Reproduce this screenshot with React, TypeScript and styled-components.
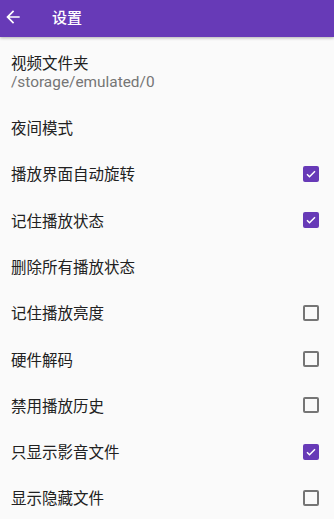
import React from 'react';
import styled, { createGlobalStyle } from 'styled-components';

interface Setting {
  id: string;
  title: string;
  summary?: string;
  checkbox?: boolean;
  checked?: boolean;
}

const GlobalStyle = createGlobalStyle`
  html, body {
    margin: 0;
    padding: 0;
    background: #fafafa;
  }
  body {
    font-family: Roboto, "Noto Sans CJK SC", sans-serif;
  }
`;

const Page = styled.div`
  width: 334px;
  height: 519px;
  overflow: hidden;
  background: #fafafa;
  display: flex;
  flex-direction: column;
`;

const Toolbar = styled.header`
  height: 37px;
  flex-shrink: 0;
  background: #673ab7;
  display: flex;
  align-items: center;
  padding: 0 0 4px 3px;
  box-sizing: border-box;
  box-shadow: 0 1px 3px rgba(0, 0, 0, 0.3);
  position: relative;
  z-index: 1;
`;

const BackButton = styled.div`
  width: 20px;
  height: 20px;
  display: flex;
  color: #fff;
`;

const Title = styled.h1`
  margin: 0 0 0 29px;
  font-family: Roboto, "Noto Sans CJK SC", sans-serif;
  font-size: 15px;
  font-weight: 500;
  color: #fff;
  letter-spacing: 0;
`;

const List = styled.div`
  display: flex;
  flex-direction: column;
`;

const Row = styled.div<{ $tall?: boolean }>`
  height: ${(p) => (p.$tall ? '67.4px' : '46.3px')};
  flex-shrink: 0;
  display: flex;
  align-items: center;
  justify-content: space-between;
  padding: ${(p) => (p.$tall ? '3px' : '0')} 15px 0 11px;
  box-sizing: border-box;
`;

const TextBlock = styled.div`
  display: flex;
  flex-direction: column;
  gap: 1px;
`;

const RowTitle = styled.div`
  font-family: "Noto Sans CJK SC", Roboto, sans-serif;
  font-size: 15.5px;
  line-height: 19px;
  color: #212121;
`;

const Summary = styled.div`
  font-family: Roboto, "Noto Sans CJK SC", sans-serif;
  font-size: 15.4px;
  line-height: 19px;
  color: #757575;
`;

const Box = styled.div<{ $checked?: boolean }>`
  width: 16px;
  height: 16px;
  box-sizing: border-box;
  border-radius: 2px;
  border: 2px solid ${(p) => (p.$checked ? '#673ab7' : '#757575')};
  background: ${(p) => (p.$checked ? '#673ab7' : 'transparent')};
  display: flex;
  align-items: center;
  justify-content: center;
`;

const settings: Setting[] = [
  { id: 'folder', title: '视频文件夹', summary: '/storage/emulated/0' },
  { id: 'night', title: '夜间模式' },
  { id: 'rotate', title: '播放界面自动旋转', checkbox: true, checked: true },
  { id: 'remember', title: '记住播放状态', checkbox: true, checked: true },
  { id: 'clear', title: '删除所有播放状态' },
  { id: 'brightness', title: '记住播放亮度', checkbox: true },
  { id: 'hw', title: '硬件解码', checkbox: true },
  { id: 'history', title: '禁用播放历史', checkbox: true },
  { id: 'media', title: '只显示影音文件', checkbox: true, checked: true },
  { id: 'hidden', title: '显示隐藏文件', checkbox: true },
];

const Checkbox: React.FC<{ checked?: boolean }> = ({ checked }) => (
  <Box $checked={checked}>
    {checked && (
      <svg width="12" height="12" viewBox="0 0 24 24">
        <path d="M4 12.5l5 5L20 6.5" fill="none" stroke="#fff" strokeWidth="3" />
      </svg>
    )}
  </Box>
);

const App: React.FC = () => (
  <Page>
    <GlobalStyle />
    <Toolbar>
      <BackButton>
        <svg width="20" height="20" viewBox="0 0 24 24">
          <path d="M20 11H7.83l5.59-5.59L12 4l-8 8 8 8 1.41-1.41L7.83 13H20v-2z" fill="currentColor" />
        </svg>
      </BackButton>
      <Title>设置</Title>
    </Toolbar>
    <List>
      {settings.map((s) => (
        <Row key={s.id} $tall={!!s.summary}>
          <TextBlock>
            <RowTitle>{s.title}</RowTitle>
            {s.summary && <Summary>{s.summary}</Summary>}
          </TextBlock>
          {s.checkbox && <Checkbox checked={s.checked} />}
        </Row>
      ))}
    </List>
  </Page>
);

export default App;
